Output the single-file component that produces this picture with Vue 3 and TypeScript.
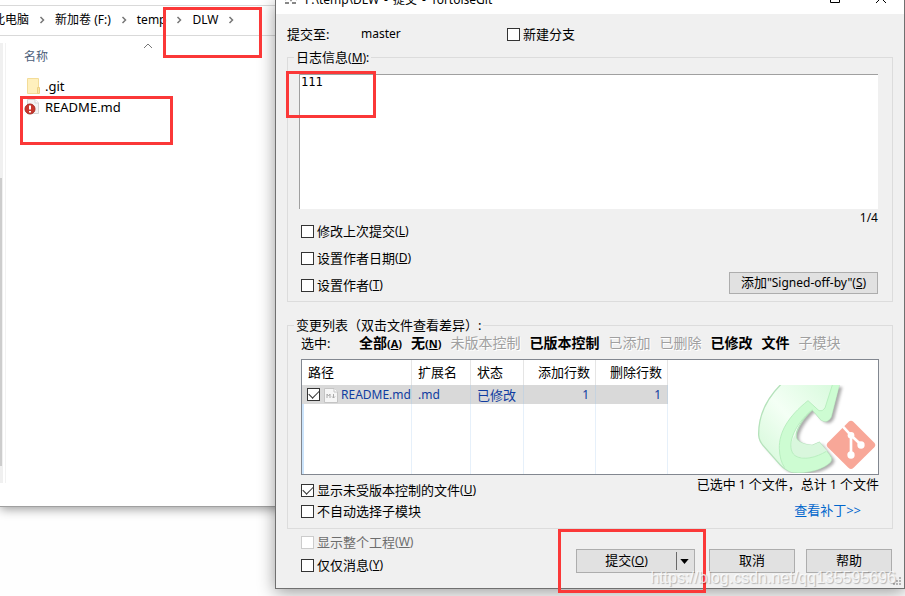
<script setup lang="ts">
import { ref } from 'vue'

interface Filter {
  text: string
  accel?: string
  disabled?: boolean
}

interface ChangedFile {
  name: string
  ext: string
  status: string
  added: number
  removed: number
  checked: boolean
}

const message = ref('111')
const newBranch = ref(false)
const showUnversioned = ref(true)
const skipSubmodules = ref(false)
const wholeProject = ref(false)
const messageOnly = ref(false)

const crumbs = ['此电脑', '新加卷 (F:)', 'temp', 'DLW']

const options = ref([
  { id: 'amend', text: '修改上次提交', accel: 'L', on: false },
  { id: 'date', text: '设置作者日期', accel: 'D', on: false },
  { id: 'author', text: '设置作者', accel: 'T', on: false },
])

const filters: Filter[] = [
  { text: '全部', accel: 'A' },
  { text: '无', accel: 'N' },
  { text: '未版本控制', disabled: true },
  { text: '已版本控制' },
  { text: '已添加', disabled: true },
  { text: '已删除', disabled: true },
  { text: '已修改' },
  { text: '文件' },
  { text: '子模块', disabled: true },
]

const files = ref<ChangedFile[]>([
  { name: 'README.md', ext: '.md', status: '已修改', added: 1, removed: 1, checked: true },
])
</script>

<template>
  <main class="desktop">
    <section class="explorer">
      <nav class="crumbs">
        <template v-for="crumb in crumbs" :key="crumb">
          <a href="#">{{ crumb }}</a>
          <svg class="chevron" viewBox="0 0 6 8" aria-hidden="true"><path d="M1.5 1 4.5 4 1.5 7" /></svg>
        </template>
      </nav>
      <div class="panes">
        <div class="scroll"><div class="thumb"></div></div>
        <div class="files">
          <div class="name-head">
            <span>名称</span>
            <svg viewBox="0 0 10 6" aria-hidden="true"><path d="M1 5 5 1 9 5" /></svg>
          </div>
          <ul>
            <li>
              <svg viewBox="0 0 16 18" aria-hidden="true">
                <path d="M3.500 1.500H14.500V16.500H3.500Z" fill="#fff0bd" stroke="#f3dc98" />
                <path d="M13.500 10.500H15.500V16.500H13.500Z" fill="#fbe6a4" stroke="#ecd084" />
              </svg>
              <a href="#">.git</a>
            </li>
            <li>
              <svg viewBox="0 0 16 18" aria-hidden="true">
                <path d="M3.500 1.500H11L14.500 5V15.500H3.500Z" fill="#f3f3f3" stroke="#d5d5d5" />
                <path d="M11 1.500V5H14.500" fill="#fff" stroke="#d5d5d5" />
                <circle cx="6" cy="11" r="5" fill="#c8372d" stroke="#a92c24" />
                <path d="M6 7.500V11.500M6 13V14.500" stroke="#fff" stroke-width="2" />
              </svg>
              <a href="#">README.md</a>
            </li>
          </ul>
        </div>
      </div>
    </section>

    <section class="dialog" aria-label="TortoiseGit">
      <header class="titlebar">
        <svg class="app" viewBox="0 0 14 14" aria-hidden="true">
          <path d="M1 10 4 6 7 10 10 6 13 10M1 13H5M8 13H12M4 6V2M10 6V2" fill="none" stroke="#888" stroke-width="2" />
        </svg>
        <h1><span>F:\temp\DLW</span><span>-</span><span>提交</span><span>-</span><span>TortoiseGit</span></h1>
        <button type="button" aria-label="最大化">
          <svg viewBox="0 0 12 12"><path d="M1.500 1.500H10.500V10.500H1.500Z" /></svg>
        </button>
        <button type="button" aria-label="关闭">
          <svg viewBox="0 0 12 12"><path d="M1 1 11 11M11 1 1 11" /></svg>
        </button>
      </header>

      <form class="body" @submit.prevent>
        <div class="branch">
          <span class="to">提交至:</span>
          <span class="master">master</span>
          <label class="check"><input v-model="newBranch" type="checkbox" />新建分支</label>
        </div>

        <fieldset class="log">
          <legend><label for="msg">日志信息<span class="latin">(<u>M</u>):</span></label></legend>
          <textarea id="msg" v-model="message" spellcheck="false"></textarea>
          <div class="counter latin">1/4</div>
          <div class="log-foot">
            <div class="options">
              <label v-for="o in options" :key="o.id" class="check">
                <input v-model="o.on" type="checkbox" />{{ o.text }}<span class="latin">(<u>{{ o.accel }}</u>)</span>
              </label>
            </div>
            <button type="button" class="btn signed">添加<span class="latin">"Signed-off-by"(<u>S</u>)</span></button>
          </div>
        </fieldset>

        <fieldset class="changes">
          <legend>变更列表（双击文件查看差异）:</legend>
          <div class="filters">
            <span class="pick">选中:</span>
            <button v-for="f in filters" :key="f.text" type="button" :disabled="f.disabled">
              {{ f.text }}<span v-if="f.accel" class="key">(<u>{{ f.accel }}</u>)</span>
            </button>
          </div>

          <div class="list">
            <table>
              <colgroup><col class="c1" /><col class="c2" /><col class="c3" /><col class="c4" /><col class="c5" /></colgroup>
              <thead>
                <tr><th>路径</th><th>扩展名</th><th>状态</th><th class="num">添加行数</th><th class="num">删除行数</th></tr>
              </thead>
              <tbody>
                <tr v-for="file in files" :key="file.name" class="row">
                  <td>
                    <label class="file">
                      <input v-model="file.checked" type="checkbox" />
                      <svg viewBox="0 0 14 16" aria-hidden="true">
                        <path d="M.5 1.500H10L13.500 5V15.500H.5Z" fill="#f6f6f6" stroke="#c4c4c4" />
                        <path d="M10 1.500V5H13.500" fill="#fff" stroke="#c4c4c4" />
                        <path d="M3 11V7L4.500 9 6 7V11M9.500 7V11M8 9.500 9.500 11 11 9.500" fill="none" stroke="#aaa" />
                      </svg>
                      <span class="latin">{{ file.name }}</span>
                    </label>
                  </td>
                  <td class="latin">{{ file.ext }}</td>
                  <td>{{ file.status }}</td>
                  <td class="num latin">{{ file.added }}</td>
                  <td class="num latin">{{ file.removed }}</td>
                </tr>
                <tr class="rest"><td></td><td></td><td></td><td></td><td></td></tr>
              </tbody>
            </table>
            <svg class="logo" viewBox="15 30 363 264" aria-hidden="true">
              <defs>
                <linearGradient id="face" x1="0" y1="1" x2="1" y2="0">
                  <stop offset="0" stop-color="#cff8d4" />
                  <stop offset=".5" stop-color="#f4fff5" />
                  <stop offset="1" stop-color="#d6fadb" />
                </linearGradient>
                <filter id="soft" x="-20%" y="-20%" width="140%" height="140%"><feGaussianBlur stdDeviation="5" /></filter>
              </defs>
              <path d="M95 30C50 70 25 120 26 180Q27 197 39 211L90 269Q108 289 132 292C175 295 218 283 240 262Q249 250 240 242L208 202 187 211Q157 211 142 195C129 177 155 133 187 104L213 134Q232 146 243 126L268 30Z" fill="#888" opacity=".7" transform="translate(9 6)" filter="url(#soft)" />
              <path d="M95 26C50 70 25 120 26 180Q27 197 39 211L90 269Q108 289 132 292C175 295 218 283 240 262Q249 250 240 242L208 202 187 211Q157 211 142 195C129 177 155 133 187 104L213 134Q232 146 243 126L268 26Z" fill="url(#face)" stroke="#b5e2bb" stroke-width="4" />
              <path d="M174 77C112 126 87 174 88 220Q89 257 104 278Q116 290 132 292C175 295 218 283 240 262Q249 250 229 229C200 247 158 258 135 242C106 219 129 151 187 104L213 134Q232 146 243 126L268 30H247L225 99Q217 111 207 107Z" fill="#cdfcd2" />
              <path d="M135 242C118 233 119 202 137 178Q135 207 187 211L208 202 232 229C199 248 160 255 135 242Z" fill="#d9f7dd" />
              <path d="M174 77C112 126 87 174 88 220Q89 257 104 278M247 30 225 99Q217 111 207 107L174 77M187 104C129 151 106 219 135 242C158 258 200 247 229 229" fill="none" stroke="#b8efbf" stroke-width="3" />
              <path d="M296 140Q303 135 310 140L373 203Q379 210 373 217L310 279Q303 285 296 279L233 217Q227 210 233 203Z" fill="#f8a798" />
              <path d="M279 155 303 181 333 209M303 181V240" fill="none" stroke="#fff" stroke-width="8" />
              <g fill="#fff"><circle cx="303" cy="181" r="10" /><circle cx="333" cy="210" r="11" /><circle cx="303" cy="240" r="11" /></g>
            </svg>
          </div>

          <div class="list-foot">
            <div class="toggles">
              <label class="check"><input v-model="showUnversioned" type="checkbox" />显示未受版本控制的文件<span class="latin">(<u>U</u>)</span></label>
              <label class="check"><input v-model="skipSubmodules" type="checkbox" />不自动选择子模块</label>
            </div>
            <div class="summary">
              <span>已选中<span class="latin"> 1 </span>个文件，总计<span class="latin"> 1 </span>个文件</span>
              <a href="#">查看补丁&gt;&gt;</a>
            </div>
          </div>
        </fieldset>

        <footer class="foot">
          <div class="extras">
            <label class="check off"><input v-model="wholeProject" type="checkbox" disabled />显示整个工程<span class="latin">(<u>W</u>)</span></label>
            <label class="check"><input v-model="messageOnly" type="checkbox" />仅仅消息<span class="latin">(<u>Y</u>)</span></label>
          </div>
          <div class="split">
            <button type="submit" class="btn">提交<span class="latin">(<u>O</u>)</span></button>
            <button type="button" class="btn drop" aria-label="更多"><svg viewBox="0 0 10 6"><path d="M0 0H10L5 6Z" /></svg></button>
          </div>
          <button type="button" class="btn plain">取消</button>
          <button type="button" class="btn plain last">帮助</button>
        </footer>
      </form>
      <svg class="grip" viewBox="0 0 9 9" aria-hidden="true">
        <path d="M6 0h2v2h-2zM3 3h2v2h-2zM6 3h2v2h-2zM0 6h2v2h-2zM3 6h2v2h-2zM6 6h2v2h-2z" fill="#b5b5b5" />
      </svg>
    </section>

    <div class="mark mark-path"></div>
    <div class="mark mark-file"></div>
    <div class="mark mark-message"></div>
    <div class="mark mark-commit"></div>
    <div class="watermark">https://blog.csdn.net/qq135595696</div>
  </main>
</template>

<style>
body {
  overflow: hidden;
}
</style>

<style scoped>
* {
  box-sizing: border-box;
}
.desktop {
  position: relative;
  min-height: 100vh;
  overflow: hidden;
  background: #fefefe;
  color: #000;
  font: 13px/16px "Noto Sans", "Noto Sans CJK SC", sans-serif;
}
.latin {
  font-size: 12px;
}
.key {
  font-size: 11px;
}
button,
textarea {
  font: inherit;
  color: inherit;
}
a {
  color: inherit;
  text-decoration: none;
}

.explorer {
  display: flex;
  flex-direction: column;
  height: 507px;
  padding-top: 5px;
  border-bottom: 1px solid #a0a0a0;
  background: #fff;
  box-shadow: 0 2px 10px rgba(0, 0, 0, 0.4);
}
.crumbs {
  display: flex;
  align-items: center;
  gap: 10px;
  height: 31px;
  padding-bottom: 1px;
  border: solid #d9d9d9;
  border-width: 1px 0;
  font-size: 12px;
  white-space: nowrap;
}
.crumbs a:first-child {
  margin-left: -7px;
}
.chevron {
  width: 6px;
  height: 8px;
  fill: none;
  stroke: #777;
  stroke-width: 1.5;
}
.panes {
  display: flex;
  height: 447px;
  padding-top: 7px;
}
.scroll {
  width: 3px;
  padding-top: 135px;
  background: #f0f0f0;
}
.thumb {
  width: 2px;
  height: 288px;
  background: #cdcdcd;
}
.files {
  margin-left: 2px;
  padding-left: 18px;
  border-left: 1px solid #f2f2f2;
}
.name-head {
  display: flex;
  gap: 95px;
  padding-top: 6px;
  color: #4c607a;
  font-size: 12px;
}
.name-head svg {
  width: 10px;
  height: 6px;
  margin-top: -6px;
  fill: none;
  stroke: #777;
}
ul {
  margin: 10px 0 0;
  padding: 0;
  list-style: none;
}
li {
  display: flex;
  align-items: center;
  gap: 5px;
  height: 21px;
}
li svg {
  width: 16px;
  height: 18px;
}

.dialog {
  position: absolute;
  top: 0;
  right: 0;
  left: 275px;
  height: 589px;
  border: solid #707070;
  border-width: 0 1px 1px;
  background: #f0f0f0;
  box-shadow: 0 3px 16px rgba(0, 0, 0, 0.4);
}
.titlebar {
  display: flex;
  align-items: flex-end;
  height: 14px;
  padding: 0 17px 10px 8px;
  background: #fff;
}
.titlebar h1 {
  display: flex;
  flex: 1;
  gap: 5px;
  margin: 0 0 -4px 7px;
  font-size: 12px;
  font-weight: 400;
  line-height: 16px;
}
.titlebar .app {
  width: 14px;
  height: 14px;
}
.titlebar button {
  width: 12px;
  height: 12px;
  margin-left: 34px;
  padding: 0;
  border: 0;
  background: none;
}
.titlebar button svg {
  display: block;
  fill: none;
  stroke: #000;
}
.body {
  padding: 12px 11px 0;
}
.branch {
  display: flex;
  align-items: center;
  height: 16px;
  margin-bottom: 7px;
}
.to {
  width: 74px;
}
.master {
  width: 146px;
  font-size: 12px;
}
.check {
  display: flex;
  align-items: center;
  height: 16px;
  white-space: nowrap;
}
input[type="checkbox"] {
  appearance: none;
  display: grid;
  place-items: center;
  width: 13px;
  height: 13px;
  margin: 0 3px 0 0;
  border: 1px solid #333;
  background: #fff;
}
input[type="checkbox"]:checked::before {
  content: "";
  width: 9px;
  height: 5px;
  margin-top: -3px;
  border: solid #333;
  border-width: 0 0 1px 1px;
  transform: rotate(-45deg);
}
input[type="checkbox"]:disabled {
  border-color: #ccc;
}
.off {
  color: #6d6d6d;
}
fieldset {
  min-width: 0;
  margin: 0;
  padding: 0 13px;
  border: 1px solid #dcdcdc;
}
legend {
  height: 16px;
  margin-left: -7px;
  padding: 0 2px;
}
.log {
  height: 253px;
  padding-right: 14px;
}
textarea {
  display: block;
  width: calc(100% + 2px);
  height: 135px;
  margin: 9px 0 0 -2px;
  padding: 0 1px;
  border: solid #a0a0a0;
  border-width: 1px 0 0 1px;
  outline: 0;
  background: #fff;
  font: 12px/15px "DejaVu Sans Mono", monospace;
  resize: none;
}
.counter {
  height: 13px;
  margin-top: 1px;
  text-align: right;
}
.log-foot {
  display: flex;
  align-items: flex-end;
  justify-content: space-between;
}
.options {
  display: grid;
  gap: 11px;
}
.btn {
  border: 1px solid #adadad;
  background: #e1e1e1;
  padding: 0;
  white-space: nowrap;
}
.signed {
  width: 149px;
  height: 22px;
  margin-bottom: -1px;
  padding-bottom: 2px;
}
.changes {
  height: 212px;
  margin-top: 15px;
}
.filters {
  display: flex;
  align-items: center;
  gap: 9px;
  height: 20px;
}
.pick {
  width: 49px;
}
.filters button {
  padding: 0;
  border: 0;
  background: none;
  font-size: 14px;
  font-weight: 700;
  white-space: nowrap;
}
.filters button:disabled {
  color: #a0a0a0;
  font-weight: 400;
  text-shadow: 1px 1px 0 #fff;
}
.list {
  display: flex;
  justify-content: space-between;
  align-items: flex-start;
  height: 116px;
  margin-top: 6px;
  padding-right: 2px;
  border: 1px solid #828790;
  background: #fff;
}
table {
  width: 366px;
  height: 114px;
  border-collapse: separate;
  border-spacing: 0;
  table-layout: fixed;
}
.c1 {
  width: 110px;
}
.c2 {
  width: 59px;
}
.c3 {
  width: 53px;
}
.c4,
.c5 {
  width: 72px;
}
th,
td {
  padding: 0 6px;
  border-right: 1px solid #e6f0fa;
  text-align: left;
  font-weight: 400;
  white-space: nowrap;
}
th {
  height: 25px;
  padding-bottom: 2px;
  border-color: #e5e5e5;
}
th.num {
  padding-right: 5px;
}
.num {
  text-align: right;
}
.row td {
  height: 19px;
  border-color: #c6d3df;
  background: #d9d9d9;
  color: #0f3ca0;
  line-height: 16px;
}
.row td:first-child {
  padding: 0 0 0 5px;
}
.rest td:first-child {
  border-left: 2px solid #cce4fb;
}
.file {
  display: flex;
  align-items: center;
}
.file svg {
  width: 14px;
  height: 16px;
  margin: 0 3px 0 1px;
}
.logo {
  width: 121px;
  height: 88px;
  margin-top: 25px;
}
.list-foot {
  display: flex;
  justify-content: space-between;
  padding-top: 7px;
}
.toggles {
  display: grid;
  gap: 5px;
}
.summary {
  display: flex;
  flex-direction: column;
  align-items: flex-end;
  gap: 9px;
  margin-top: -6px;
}
.summary a {
  margin-right: 18px;
  color: #0066cc;
}
.foot {
  display: flex;
  padding: 5px 1px 0 14px;
}
.extras {
  display: grid;
  flex: 1;
  gap: 7px;
}
.foot .btn {
  height: 24px;
  padding-bottom: 2px;
}
.split {
  display: flex;
  margin-top: 15px;
}
.split .btn:first-child {
  width: 100px;
  border-right: 0;
}
.foot .drop {
  position: relative;
  display: grid;
  place-items: center;
  width: 19px;
  padding: 0 1px 0 0;
  border-left: 0;
}
.drop::before {
  position: absolute;
  top: 2px;
  bottom: 2px;
  left: 0;
  border-left: 1px solid #696969;
  content: "";
}
.drop svg {
  width: 9px;
  height: 5px;
}
.plain {
  width: 86px;
  margin: 15px 0 0 14px;
}
.last {
  margin-left: 11px;
}
.grip {
  position: absolute;
  right: 2px;
  bottom: 2px;
  width: 9px;
  height: 9px;
}
.mark {
  position: absolute;
  border: 3px solid #fb3838;
  pointer-events: none;
}
.mark-path {
  top: 7px;
  left: 163px;
  width: 99px;
  height: 51px;
}
.mark-file {
  top: 96px;
  left: 20px;
  width: 153px;
  height: 49px;
}
.mark-message {
  top: 71px;
  left: 286px;
  width: 90px;
  height: 47px;
}
.mark-commit {
  top: 529px;
  left: 558px;
  width: 148px;
  height: 64px;
}
.watermark {
  position: absolute;
  top: 568px;
  right: 9px;
  color: rgba(255, 255, 255, 0.75);
  font: 16px/20px "Liberation Sans", sans-serif;
  text-shadow: 1px 1px 1px rgba(0, 0, 0, 0.25);
  pointer-events: none;
}
</style>
